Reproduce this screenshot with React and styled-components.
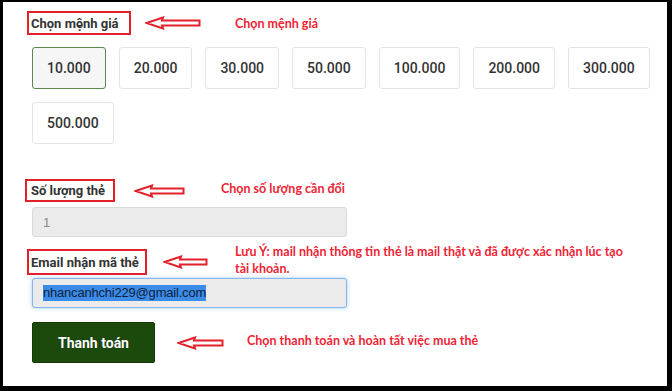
import React from "react";
import styled, { createGlobalStyle } from "styled-components";

const Global = createGlobalStyle`
  html, body { margin: 0; padding: 0; background: #fff; }
  body { font-family: Roboto, "Liberation Sans", Arial, sans-serif; }
`;

const Frame = styled.div`
  width: 672px;
  height: 391px;
  box-sizing: border-box;
  border-style: solid;
  border-color: #000;
  border-width: 2px 5px 5px 3px;
  background: #fff;
  overflow: hidden;
  padding: 9px 0 0 29px;
  display: flex;
  flex-direction: column;
  align-items: flex-start;
`;

const AnnotRow = styled.div`
  display: flex;
  align-items: center;
  height: ${(p) => p.$h}px;
  margin-top: ${(p) => p.$mt || 0}px;
`;

const LabelBox = styled.div`
  box-sizing: border-box;
  width: ${(p) => p.$w}px;
  height: ${(p) => p.$h}px;
  margin-left: ${(p) => p.$dx}px;
  padding-left: ${(p) => p.$pl}px;
  border: 2px solid #e3212b;
  display: flex;
  align-items: center;
  font-family: Roboto, "Liberation Sans", sans-serif;
  font-weight: 700;
  font-size: 13px;
  color: #333;
  white-space: nowrap;
  flex: none;
`;

const ArrowSvg = styled.svg`
  flex: none;
  margin-left: ${(p) => p.$ml}px;
  display: block;
`;

const Note = styled.div`
  flex: none;
  margin-left: ${(p) => p.$ml}px;
  margin-top: ${(p) => p.$mt || 0}px;
  width: ${(p) => (p.$w ? `${p.$w}px` : "auto")};
  font-family: Lato, "Open Sans", sans-serif;
  font-weight: 700;
  font-size: 12.5px;
  line-height: 17px;
  color: #ee2434;
  background: #fff;
  white-space: ${(p) => (p.$w ? "normal" : "nowrap")};
`;

const Amounts = styled.div`
  display: flex;
  flex-wrap: wrap;
  gap: 13px;
  width: 622px;
  margin-top: 12px;
`;

const AmountButton = styled.button`
  box-sizing: border-box;
  height: 42px;
  padding: 0 14px;
  border: 1px solid ${(p) => (p.$active ? "#5b8a4c" : "#e4e4e4")};
  background: ${(p) => (p.$active ? "#f6f6f6" : "#fff")};
  border-radius: 3px;
  font-family: Roboto, "Liberation Sans", sans-serif;
  font-weight: 500;
  font-size: 14px;
  color: #333;
  cursor: pointer;
`;

const Field = styled.div`
  box-sizing: border-box;
  width: 315px;
  height: 30px;
  margin-top: ${(p) => p.$mt}px;
  padding-left: 10px;
  display: flex;
  align-items: center;
  background: #ebebeb;
  border: 1px solid ${(p) => (p.$focus ? "#86b6e9" : "#dadada")};
  box-shadow: ${(p) => (p.$focus ? "0 0 4px rgba(102,175,233,0.6)" : "none")};
  border-radius: 3px;
  font-family: "Liberation Sans", Arial, sans-serif;
  font-size: 13px;
  letter-spacing: -0.2px;
  color: ${(p) => (p.$focus ? "#1a1a1a" : "#8a8a8a")};
`;

const Selected = styled.span`
  background: #3b8ce8;
  color: #10213a;
  line-height: 16px;
`;

const PayRow = styled.div`
  display: flex;
  align-items: center;
  margin-top: 14px;
`;

const PayButton = styled.button`
  box-sizing: border-box;
  width: 123px;
  height: 41px;
  background: #1b4a0c;
  border: 1px solid #143a09;
  border-radius: 2px;
  color: #fff;
  font-family: Roboto, "Liberation Sans", sans-serif;
  font-weight: 700;
  font-size: 14px;
  text-shadow: 0 0 1px #0c2005;
  cursor: pointer;
  flex: none;
`;

function Arrow({ w, ml }) {
  const h = 14;
  const d = `M1.5 7 L18 1.5 L17 4.5 L${w - 1.5} 4.5 L${w - 1.5} 9.5 L17 9.5 L18 12.5 Z`;
  return (
    <ArrowSvg $ml={ml} width={w} height={h} viewBox={`0 0 ${w} ${h}`}>
      <path d={d} fill="#fff" stroke="#e3212b" strokeWidth="2" strokeLinejoin="miter" />
    </ArrowSvg>
  );
}

const amounts = ["10.000", "20.000", "30.000", "50.000", "100.000", "200.000", "300.000", "500.000"];

export default function App() {
  return (
    <>
      <Global />
      <Frame>
        <AnnotRow $h={24}>
          <LabelBox $w={104} $h={24} $dx={-5} $pl={2}>Chọn mệnh giá</LabelBox>
          <Arrow w={56} ml={14} />
          <Note $ml={34}>Chọn mệnh giá</Note>
        </AnnotRow>

        <Amounts>
          {amounts.map((a, i) => (
            <AmountButton key={a} $active={i === 0}>{a}</AmountButton>
          ))}
        </Amounts>

        <AnnotRow $h={23} $mt={35}>
          <LabelBox $w={90} $h={23} $dx={-7} $pl={4}>Số lượng thẻ</LabelBox>
          <Arrow w={51} ml={19} />
          <Note $ml={36} $mt={-4}>Chọn số lượng cần đổi</Note>
        </AnnotRow>
        <Field $mt={5}>1</Field>

        <AnnotRow $h={26} $mt={12}>
          <LabelBox $w={120} $h={26} $dx={-5} $pl={2}>Email nhận mã thẻ</LabelBox>
          <Arrow w={45} ml={16} />
          <Note $ml={27} $w={396} $mt={-4}>
            Lưu Ý: mail nhận thông tin thẻ là mail thật và đã được xác nhận lúc tạo tài khoản.
          </Note>
        </AnnotRow>
        <Field $mt={3} $focus>
          <Selected>nhancanhchi229@gmail.com</Selected>
        </Field>

        <PayRow>
          <PayButton>Thanh toán</PayButton>
          <Arrow w={47} ml={22} />
          <Note $ml={23} $mt={-5}>Chọn thanh toán và hoàn tất việc mua thẻ</Note>
        </PayRow>
      </Frame>
    </>
  );
}
